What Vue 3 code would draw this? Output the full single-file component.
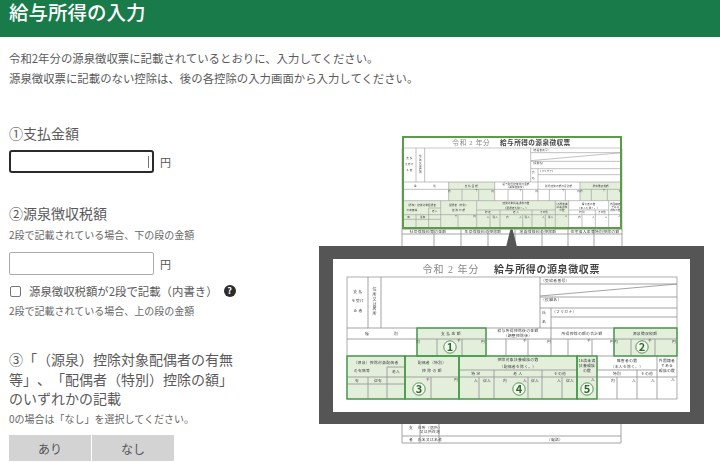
<script setup>
const frameLines = [
  [402, 229, 402, 246], [434, 229, 434, 246], [461, 229, 461, 246], [488, 229, 488, 246],
  [515, 229, 515, 246], [542, 229, 542, 246], [568, 229, 568, 246], [594, 229, 594, 246],
  [622, 229, 622, 246], [402, 234, 622, 234],
  [402, 424, 402, 443], [420, 424, 420, 443], [439, 424, 439, 443], [621, 424, 621, 443],
  [402, 436, 621, 436], [402, 443, 621, 443]
]
const frameTexts = [
  [428, 233, '社会保険料等の金額'], [483, 233, '生命保険料の控除額'],
  [538, 233, '地震保険料の控除額'], [595, 233, '住宅借入金等特別控除の額'],
  [411, 429, '支'], [411, 441, '者'], [430, 429, '住所（居所）'], [430, 433, '又は所在地'],
  [430, 441, '氏名又は名称'], [555, 441, '（電話）']
]
const fills = [
  [417, 328, 69, 28], [614, 328, 63, 28], [347, 356, 58, 43],
  [405, 356, 54, 43], [459, 356, 118, 43], [577, 356, 20, 43]
]
const lines = [
  [347, 328, 677, 328], [347, 339, 677, 339], [347, 356, 677, 356],
  [368, 277, 368, 328], [381, 277, 381, 328], [540, 277, 540, 328],
  [540, 284, 677, 284], [540, 296, 677, 284], [540, 297, 677, 297],
  [540, 308, 677, 308], [551, 308, 551, 328], [551, 317, 677, 317],
  [417, 328, 417, 356], [437, 339, 437, 356], [462, 339, 462, 356], [486, 328, 486, 356],
  [506, 339, 506, 356], [528, 339, 528, 356], [551, 328, 551, 356], [568, 339, 568, 356],
  [592, 339, 592, 356], [614, 328, 614, 356], [631, 339, 631, 356], [655, 339, 655, 356],
  [347, 377, 677, 377], [347, 384, 405, 384], [368, 377, 368, 399], [387, 367, 387, 399],
  [387, 367, 405, 367], [405, 356, 405, 399], [431, 377, 431, 399], [459, 356, 459, 399],
  [459, 370, 577, 370], [597, 370, 657, 370], [479, 377, 479, 399], [494, 370, 494, 399],
  [528, 377, 528, 399], [542, 370, 542, 399], [562, 377, 562, 399], [577, 356, 577, 399],
  [597, 356, 597, 399], [617, 377, 617, 399], [637, 370, 637, 399], [657, 356, 657, 399]
]
const labels = [
  [358, 293, '支 払'], [358, 302, 'を受け'], [358, 312, 'る 者'],
  [367, 335, '種'], [396, 335, '別'], [451, 335, '支 払 金 額'],
  [518, 332, '給与所得控除後の金額'], [518, 337, '（調整控除後）'],
  [582, 335, '所得控除の額の合計額'], [645, 335, '源泉徴収税額'],
  [376, 364, '（源泉）控除対象配偶者'], [362, 372, 'の有無等'], [396, 373, '老人'],
  [357, 382, '有'], [378, 382, '従有'],
  [432, 364, '配偶者（特別）'], [432, 372, '控 除 の 額'],
  [518, 361, '控除対象扶養親族の数'], [518, 368, '（配偶者を除く。）'],
  [476, 375, '特 定'], [518, 375, '老 人'], [560, 375, 'その他'],
  [587, 362, '16歳未満'], [587, 367, '扶養親族'], [587, 372, 'の数'],
  [627, 362, '障害者の数'], [627, 368, '（本人を除く。）'], [617, 375, '特別'], [647, 375, 'その他'],
  [667, 362, '外国籍者'], [667, 367, 'である'], [667, 372, '親族の数'],
  [418, 343, '内'], [459, 342, '千'], [483, 343, '円'], [525, 342, '千'], [549, 343, '円'],
  [589, 342, '千'], [612, 343, '円'], [616, 343, '内'], [650, 342, '千'], [674, 343, '円'],
  [428, 381, '千'], [456, 381, '円'], [476, 382, '人'], [487, 382, '従人'], [505, 382, '内'],
  [525, 382, '人'], [535, 382, '従人'], [559, 382, '人'], [570, 382, '従人'], [593, 381, '人'],
  [613, 382, '内'], [634, 382, '人'], [653, 382, '人'], [673, 381, '人'],
  [544, 314, '氏'], [544, 323, '名']
]
const startLabels = [
  [541, 281.5, '（受給者番号）'], [541, 300.5, '（役職名）'], [552, 312.5, '（フリガナ）']
]
const circles = [
  [450, 347, '1'], [642, 347, '2'], [419, 389, '3'], [519, 389, '4'], [587, 389, '5']
]
const forms = [
  { id: 'small', transform: 'translate(402 148) scale(0.6667) translate(-347 -277)', large: false },
  { id: 'large', transform: '', large: true }
]
</script>

<template>
  <div class="page">
    <header class="header"><h1>給与所得の入力</h1></header>
    <div class="intro">
      <p>令和2年分の源泉徴収票に記載されているとおりに、入力してください。</p>
      <p>源泉徴収票に記載のない控除は、後の各控除の入力画面から入力してください。</p>
    </div>
    <div class="content">
      <div class="form">
        <div class="label first">①支払金額</div>
        <div class="field">
          <span class="input-wrap">
            <input class="input focused" type="text" />
            <span class="caret"></span>
          </span>
          <span class="unit">円</span>
        </div>
        <div class="label second">②源泉徴収税額</div>
        <div class="note note-a">2段で記載されている場合、下の段の金額</div>
        <div class="field field-b">
          <span class="input-wrap"><input class="input" type="text" /></span>
          <span class="unit">円</span>
        </div>
        <div class="check">
          <span class="box"></span>
          <span class="check-text">源泉徴収税額が2段で記載（内書き）</span>
          <span class="help">?</span>
        </div>
        <div class="note note-c">2段で記載されている場合、上の段の金額</div>
        <div class="label third">
          <div>③「（源泉）控除対象配偶者の有無</div>
          <div>等」、「配偶者（特別）控除の額」</div>
          <div>のいずれかの記載</div>
        </div>
        <div class="note note-d">0の場合は「なし」を選択してください。</div>
        <div class="buttons">
          <button class="btn">あり</button>
          <button class="btn">なし</button>
        </div>
      </div>
      <svg class="picture" viewBox="319 136 385 327" width="385" height="327">
        <g class="thin">
          <line v-for="(l, i) in frameLines" :key="'f' + i" :x1="l[0]" :y1="l[1]" :x2="l[2]" :y2="l[3]" />
        </g>
        <text v-for="(t, i) in frameTexts" :key="'ft' + i" class="tiny" :x="t[0]" :y="t[1]">{{ t[2] }}</text>

        <rect x="402" y="136" width="220" height="93" fill="#fff" />
        <polygon points="511.5,225 506,247 517,247" fill="#555" />
        <rect x="319" y="246" width="385" height="178" fill="#555" />
        <rect x="333" y="259" width="357" height="153" fill="#fff" />

        <g v-for="f in forms" :key="f.id" :transform="f.transform">
          <rect v-for="(r, i) in fills" :key="'g' + i" :x="r[0]" :y="r[1]" :width="r[2]" :height="r[3]" fill="#e3eedb" />
          <rect x="347" y="277" width="330" height="122" fill="none" stroke="#999" stroke-width="0.8" />
          <g class="thin">
            <line v-for="(l, i) in lines" :key="'l' + i" :x1="l[0]" :y1="l[1]" :x2="l[2]" :y2="l[3]" />
          </g>
          <text x="451" y="273" class="year">令和 2 年分</text>
          <text x="547" y="273" class="title">給与所得の源泉徴収票</text>
          <text x="374.5" y="302" class="vertical">住所又は居所</text>
          <text v-for="(t, i) in labels" :key="'t' + i" class="tiny" :x="t[0]" :y="t[1]">{{ t[2] }}</text>
          <text v-for="(t, i) in startLabels" :key="'s' + i" class="tiny start" :x="t[0]" :y="t[1]">{{ t[2] }}</text>
          <g v-if="f.large">
            <rect v-for="(r, i) in fills" :key="'b' + i" :x="r[0]" :y="r[1]" :width="r[2]" :height="r[3]" fill="none" stroke="#3f9a45" stroke-width="1.3" />
            <g v-for="c in circles" :key="c[2]">
              <circle :cx="c[0]" :cy="c[1]" r="6.2" fill="#f4f8f0" stroke="#4a8a4a" stroke-width="0.9" />
              <text :x="c[0]" :y="c[1] + 4" class="num">{{ c[2] }}</text>
            </g>
          </g>
        </g>
        <rect x="403" y="137" width="218" height="91" fill="none" stroke="#5c9c46" stroke-width="2" />
      </svg>
    </div>
  </div>
</template>

<style scoped>
.page {
  width: 720px;
  height: 463px;
  overflow: hidden;
  background: #fff;
  color: #555;
  font-family: "Noto Sans CJK JP", "Noto Sans", sans-serif;
  text-spacing-trim: space-all;
}
.header {
  height: 37px;
  background: #197b4a;
  padding-left: 9px;
}
.header h1 {
  margin: 0;
  color: #fff;
  font-size: 19.5px;
  font-weight: 500;
  line-height: 24px;
}
.intro {
  margin-top: 11px;
  padding-left: 9px;
  font-size: 11.4px;
  line-height: 20px;
  color: #5a5a5a;
}
.intro p {
  margin: 0;
}
.content {
  display: flex;
  align-items: flex-start;
  margin-top: 1px;
}
.form {
  width: 319px;
  flex: none;
  padding-left: 9px;
  box-sizing: border-box;
}
.label {
  font-size: 14px;
  line-height: 20px;
  color: #5a5a5a;
}
.first {
  margin-top: 34px;
}
.second {
  margin-top: 30px;
}
.third {
  margin-top: 31px;
  width: 240px;
  line-height: 19.5px;
  white-space: nowrap;
}
.field {
  display: flex;
  align-items: center;
  gap: 6px;
  margin-top: 7px;
  height: 23px;
}
.field-b {
  margin-top: 9px;
}
.input-wrap {
  position: relative;
  display: block;
  width: 145px;
  height: 23px;
}
.input {
  display: block;
  width: 100%;
  height: 100%;
  box-sizing: border-box;
  border: 1px solid #aaa;
  border-radius: 2px;
  background: #fff;
  padding: 0;
  outline: none;
}
.focused {
  border: 2px solid #2a2a2a;
  border-radius: 3px;
}
.caret {
  position: absolute;
  left: 139px;
  top: 6px;
  width: 1px;
  height: 12px;
  background: #777;
}
.unit {
  font-size: 11px;
  line-height: 16px;
}
.note {
  font-size: 10px;
  line-height: 16px;
  color: #666;
}
.note-a {
  margin-top: 4px;
}
.note-c {
  margin-top: 4px;
}
.note-d {
  margin-top: 2.5px;
}
.check {
  display: flex;
  align-items: center;
  height: 16px;
  margin-top: 8px;
  font-size: 11.4px;
  color: #5a5a5a;
}
.box {
  width: 9px;
  height: 9px;
  margin-left: 1px;
  border: 1px solid #777;
  border-radius: 2px;
  background: #fff;
  flex: none;
}
.check-text {
  margin-left: 8px;
  white-space: nowrap;
}
.help {
  width: 12px;
  height: 12px;
  margin-left: 6px;
  border-radius: 50%;
  background: #2b2b2b;
  color: #fff;
  font-size: 9px;
  font-weight: 700;
  line-height: 12px;
  text-align: center;
  flex: none;
}
.buttons {
  display: flex;
  gap: 1px;
  margin-top: 8px;
}
.btn {
  width: 82px;
  height: 26px;
  border: none;
  padding: 0;
  background: #d3d3d3;
  color: #555;
  font-family: inherit;
  font-size: 12px;
}
.picture {
  display: block;
  flex: none;
  margin-top: 47px;
  filter: blur(0.4px);
}
.thin line {
  stroke: #999;
  stroke-width: 0.9;
}
.tiny {
  font-size: 3.8px;
  fill: #444;
  text-anchor: middle;
  letter-spacing: 0.3px;
}
.start {
  text-anchor: start;
}
.year {
  font-family: "Liberation Serif", "Noto Sans CJK JP", serif;
  font-size: 10px;
  fill: #888;
  text-anchor: middle;
  letter-spacing: 1px;
}
.title {
  font-size: 10px;
  font-weight: 700;
  fill: #444;
  text-anchor: middle;
  letter-spacing: 0.6px;
}
.vertical {
  font-size: 4px;
  fill: #444;
  writing-mode: vertical-rl;
  text-anchor: middle;
  letter-spacing: 0.8px;
}
.num {
  font-size: 11px;
  font-weight: 700;
  fill: #2c6b2c;
  text-anchor: middle;
}
</style>
